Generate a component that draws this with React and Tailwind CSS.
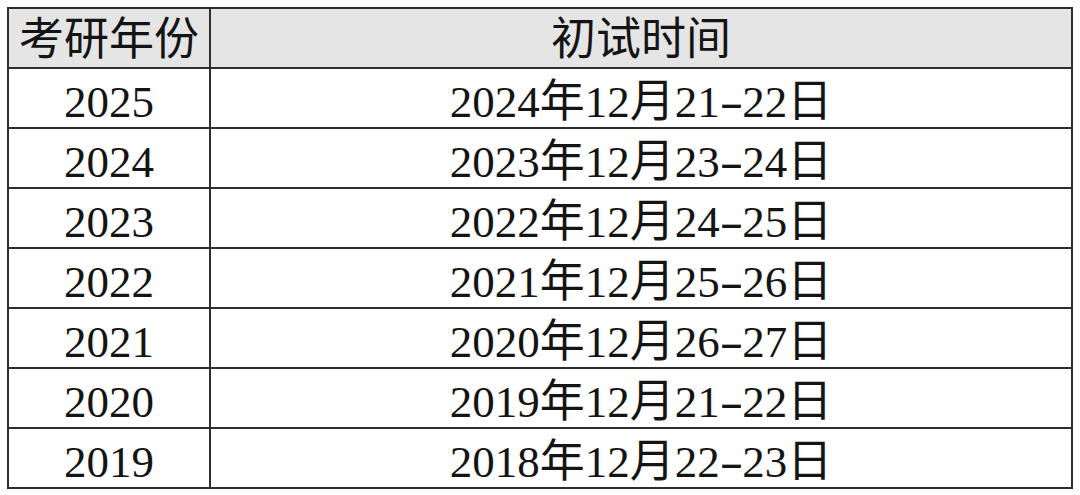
const rows = [
  ["2025", "2024", "21-22"],
  ["2024", "2023", "23-24"],
  ["2023", "2022", "24-25"],
  ["2022", "2021", "25-26"],
  ["2021", "2020", "26-27"],
  ["2020", "2019", "21-22"],
  ["2019", "2018", "22-23"],
];

function Dash() {
  return (
    <span className="inline-block w-[22.5px] text-center">
      <span className="inline-block scale-x-[1.6]">-</span>
    </span>
  );
}

export default function App() {
  return (
    <div className="h-[495px] w-[1080px] bg-white pl-[7px] pt-[7px]">
      <table
        className="w-[1066px] border-collapse text-[45px] leading-none text-[#141414]"
        style={{ fontFamily: '"Liberation Serif", "Noto Sans CJK SC", serif' }}
      >
        <thead>
          <tr className="h-[60px] bg-[#e5e5e5]">
            <th className="w-[202px] border-2 border-[#2e2e2e] pt-1 font-normal">考研年份</th>
            <th className="border-2 border-[#2e2e2e] pt-1 font-normal">初试时间</th>
          </tr>
        </thead>
        <tbody>
          {rows.map(([year, prev, days]) => {
            const [a, b] = days.split("-");
            return (
              <tr key={year} className="h-[60px]">
                <td className="border-2 border-[#2e2e2e] pt-2 text-center">{year}</td>
                <td className="border-2 border-[#2e2e2e] pt-2 text-center">
                  {prev}年12月{a}
                  <Dash />
                  {b}日
                </td>
              </tr>
            );
          })}
        </tbody>
      </table>
    </div>
  );
}
